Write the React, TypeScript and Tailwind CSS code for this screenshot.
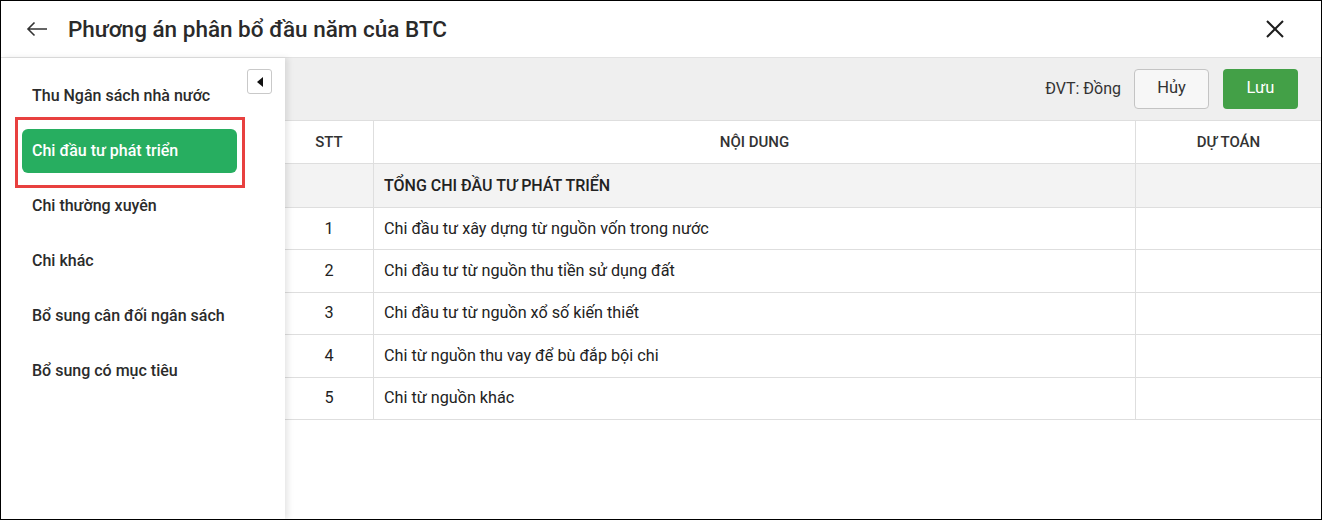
import React from "react";

const items = [
  "Thu Ngân sách nhà nước",
  "Chi đầu tư phát triển",
  "Chi thường xuyên",
  "Chi khác",
  "Bổ sung cân đối ngân sách",
  "Bổ sung có mục tiêu",
];

const rows = [
  "Chi đầu tư xây dựng từ nguồn vốn trong nước",
  "Chi đầu tư từ nguồn thu tiền sử dụng đất",
  "Chi đầu tư từ nguồn xổ số kiến thiết",
  "Chi từ nguồn thu vay để bù đắp bội chi",
  "Chi từ nguồn khác",
];

export default function App() {
  return (
    <div
      className="w-[1322px] h-[520px] border border-black bg-white flex flex-col overflow-hidden text-[#212121]"
      style={{ fontFamily: "Roboto, 'Noto Sans', sans-serif" }}
    >
      {/* Header */}
      <div className="h-[57px] shrink-0 flex items-center border-b border-[#e2e2e2] pl-[25px] pr-[36px]">
        <svg width="22" height="16" viewBox="0 0 22 16" className="text-[#333]">
          <path d="M21 8H2M8.5 1.5L2 8l6.5 6.5" fill="none" stroke="currentColor" strokeWidth="1.6" />
        </svg>
        <div className="ml-[20px] text-[22.5px] font-medium text-[#2a2a2a] leading-none">
          Phương án phân bổ đầu năm của BTC
        </div>
        <div className="flex-1" />
        <svg width="20" height="20" viewBox="0 0 20 20" className="text-[#1d1d1d]">
          <path d="M2 2L18 18M18 2L2 18" stroke="currentColor" strokeWidth="2" />
        </svg>
      </div>

      {/* Body */}
      <div className="flex-1 flex min-h-0">
        {/* Sidebar */}
        <div className="relative z-10 w-[284px] shrink-0 bg-white shadow-[3px_0_6px_rgba(0,0,0,0.10)] pt-[16px] px-[21px]">
          <div className="flex flex-col gap-[11px]">
            {items.map((t, i) => (
              <div
                key={t}
                className={
                  "h-[44px] w-[215px] flex items-center px-[10px] rounded-[6px] text-[16px] font-medium whitespace-nowrap " +
                  (i === 1 ? "bg-[#27ae60] text-white" : "text-[#2b2b2b]")
                }
              >
                {t}
              </div>
            ))}
          </div>
          {/* annotation box */}
          <div className="absolute left-[14px] top-[59px] w-[230px] h-[71px] border-[3px] border-[#e8403f] pointer-events-none" />
          {/* collapse button */}
          <div className="absolute left-[246px] top-[11px] w-[25px] h-[25px] border border-[#c9c9c9] rounded-[3px] bg-white flex items-center justify-center">
            <svg width="6" height="10" viewBox="0 0 6 10">
              <path d="M6 0L0 5l6 5z" fill="#111" />
            </svg>
          </div>
        </div>

        {/* Main */}
        <div className="flex-1 flex flex-col min-w-0">
          <div className="h-[62px] shrink-0 bg-[#efefef] flex items-center justify-end pr-[23px] pb-[1px]">
            <span className="text-[16px] text-[#333]">ĐVT: Đồng</span>
            <button className="ml-[13px] w-[75px] h-[40px] rounded-[4px] border border-[#c4c4c4] bg-[#f7f7f7] text-[16.5px] text-[#333]">
              Hủy
            </button>
            <button className="ml-[14px] w-[75px] h-[40px] rounded-[4px] bg-[#43a047] text-[16.5px] text-white">
              Lưu
            </button>
          </div>
          <div className="bg-white flex-1">
            <div className="flex h-[44px] border-t border-b border-[#dedede] text-[15px] font-medium text-[#333]">
              <div className="w-[89px] flex items-center justify-center border-r border-[#dedede]">STT</div>
              <div className="w-[762px] flex items-center justify-center border-r border-[#dedede]">NỘI DUNG</div>
              <div className="flex-1 flex items-center justify-center">DỰ TOÁN</div>
            </div>
            <div className="flex h-[44px] border-b border-[#dedede] bg-[#f3f3f3] text-[16px] font-medium text-[#222]">
              <div className="w-[89px] border-r border-[#dedede]" />
              <div className="w-[762px] flex items-center px-[10px] border-r border-[#dedede]">TỔNG CHI ĐẦU TƯ PHÁT TRIỂN</div>
              <div className="flex-1" />
            </div>
            {rows.map((r, i) => (
              <div key={r} className="flex h-[42.4px] border-b border-[#dedede] text-[16.2px] text-[#222]">
                <div className="w-[89px] flex items-center justify-center border-r border-[#dedede]">{i + 1}</div>
                <div className="w-[762px] flex items-center px-[10px] border-r border-[#dedede]">{r}</div>
                <div className="flex-1" />
              </div>
            ))}
          </div>
        </div>
      </div>
    </div>
  );
}
